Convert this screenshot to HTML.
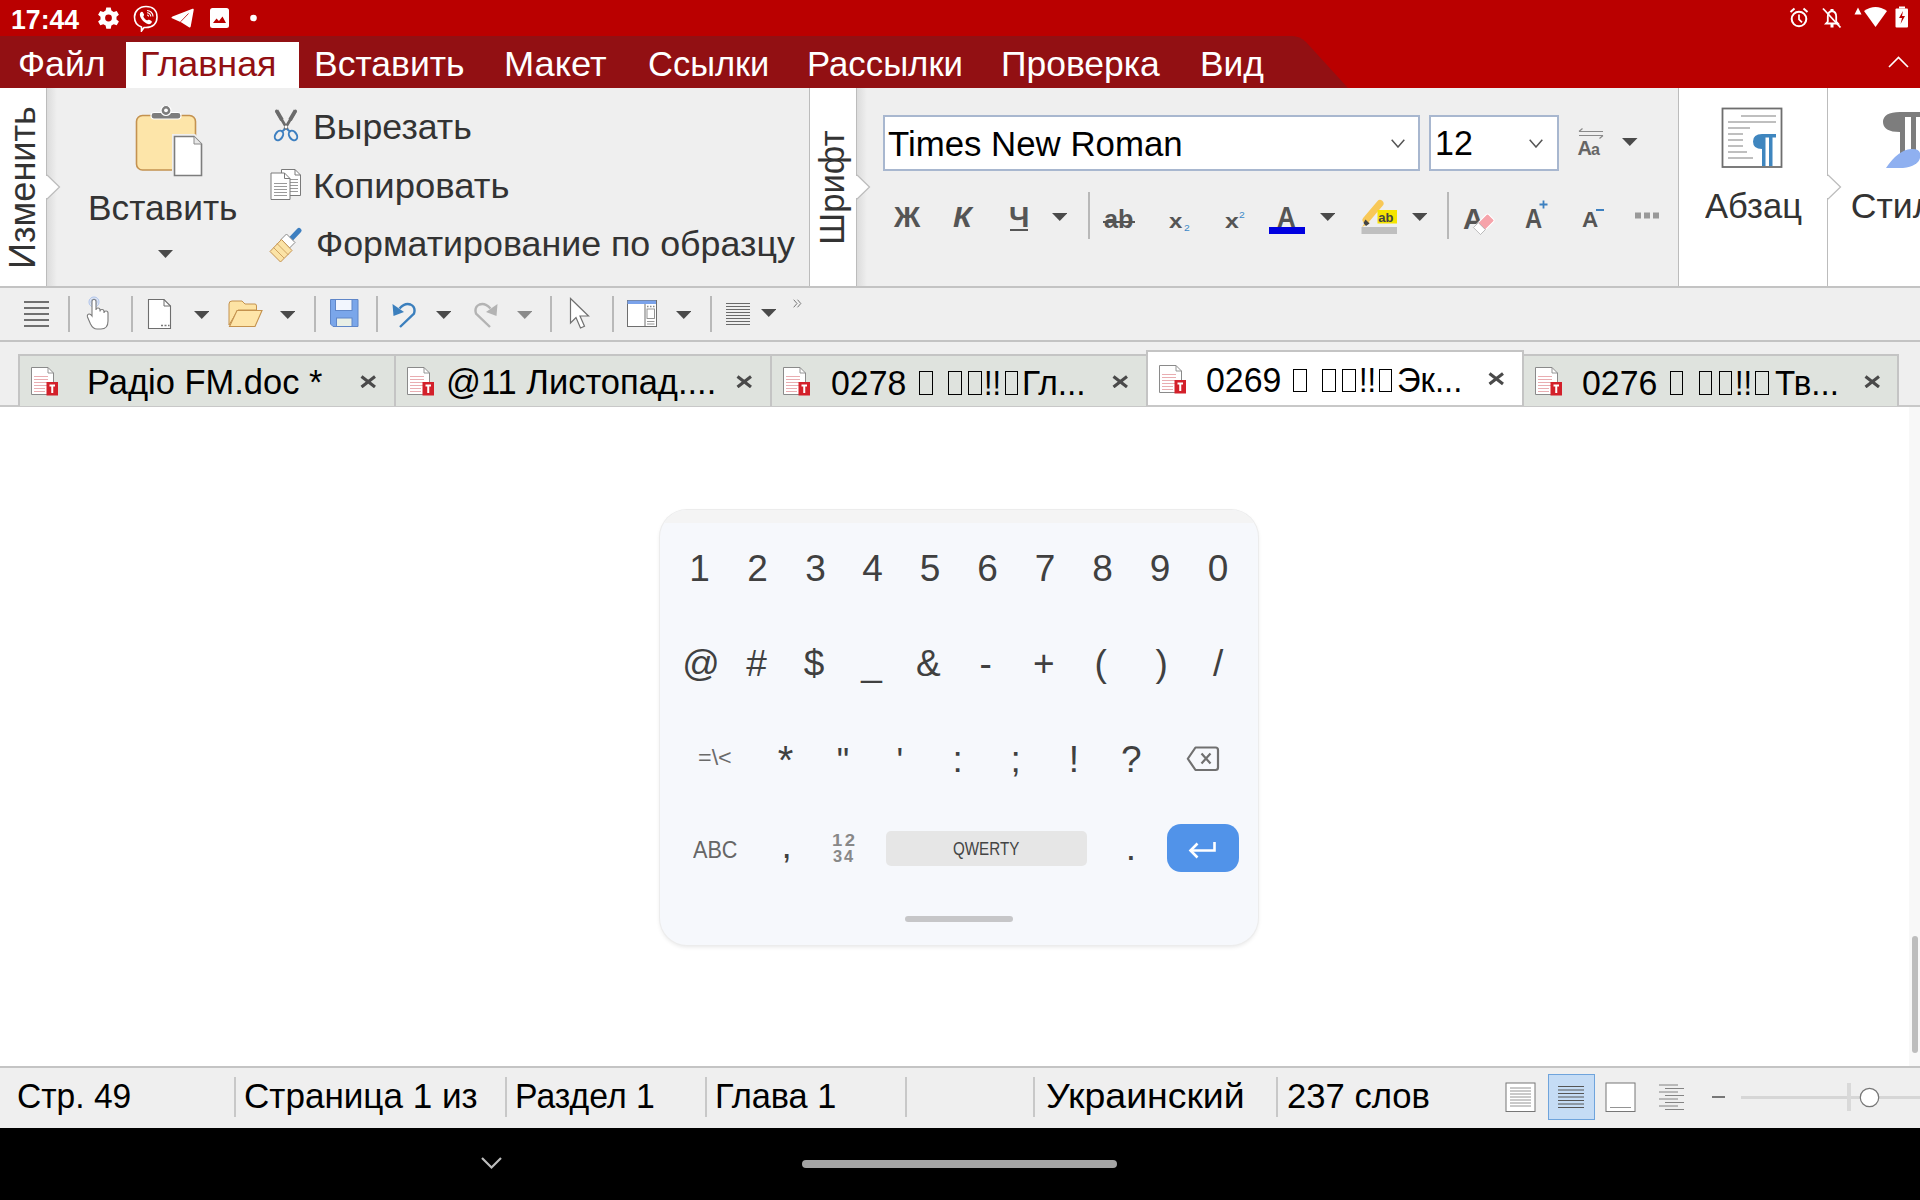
<!DOCTYPE html>
<html><head><meta charset="utf-8"><style>
html,body{margin:0;padding:0;width:1920px;height:1200px;overflow:hidden;background:#fff;font-family:"Liberation Sans",sans-serif;}
.a{position:absolute;display:block}
.t{position:absolute;white-space:pre;line-height:1;transform-origin:0 0;}
</style></head><body>
<div class="a" style="left:0px;top:0px;width:1920px;height:88px;background:#ba0000;"></div>
<svg class="a" style="left:0px;top:36px" width="1360" height="52" viewBox="0 0 1360 52"><path d="M0 0 H1292 Q1300 0 1306 6 L1348 52 H0 Z" fill="#921013"/></svg>
<div class="a" style="left:126px;top:42px;width:173px;height:46px;background:#fff;"></div>
<div class="t" style="left:11.11px;top:4.98px;font-size:28.26px;color:#fff;font-weight:700;transform:scaleX(0.9429);">17:44</div>
<div class="t" style="left:17.95px;top:47.44px;font-size:34.78px;color:#fff;transform:scaleX(1.0247);">Файл</div>
<div class="t" style="left:139.91px;top:47.44px;font-size:34.78px;color:#921013;transform:scaleX(1.0315);">Главная</div>
<div class="t" style="left:313.94px;top:47.44px;font-size:34.78px;color:#fff;transform:scaleX(1.0210);">Вставить</div>
<div class="t" style="left:503.87px;top:47.44px;font-size:34.78px;color:#fff;transform:scaleX(1.0421);">Макет</div>
<div class="t" style="left:648.02px;top:47.44px;font-size:34.78px;color:#fff;transform:scaleX(0.9915);">Ссылки</div>
<div class="t" style="left:807.00px;top:47.44px;font-size:34.78px;color:#fff;">Рассылки</div>
<div class="t" style="left:1000.94px;top:47.44px;font-size:34.78px;color:#fff;transform:scaleX(1.0196);">Проверка</div>
<div class="t" style="left:1199.95px;top:47.44px;font-size:34.78px;color:#fff;transform:scaleX(1.0169);">Вид</div>
<div class="a" style="left:0px;top:88px;width:1920px;height:199px;background:#efefef;"></div>
<div class="a" style="left:0px;top:286px;width:1920px;height:2px;background:#c3c3c3;"></div>
<svg class="a" style="left:97px;top:6px" width="23" height="24" viewBox="0 0 23 24"><g transform="translate(11.5,12)"><path fill="#fff" d="M-2.2 -10.5h4.4l0.7 3.1 2.3 1.3 3-1 2.2 3.8-2.4 2.1v2.6l2.4 2.1-2.2 3.8-3-1-2.3 1.3-0.7 3.1h-4.4l-0.7-3.1-2.3-1.3-3 1-2.2-3.8 2.4-2.1v-2.6l-2.4-2.1 2.2-3.8 3 1 2.3-1.3z"/><circle r="3.4" fill="#ba0000"/></g></svg>
<svg class="a" style="left:133px;top:5px" width="26" height="27" viewBox="0 0 26 27"><path d="M13 1.5c6.5 0 11 3.5 11 10.5s-4.5 10.5-11 10.5h-2l-2.5 3.5v-4c-4.5-1.5-7-4.5-7-10s4.5-10.5 11.5-10.5z" fill="none" stroke="#fff" stroke-width="1.6"/><path d="M7.5 7.5c1-1 2-1 2.5 0l1 2c0.3 0.8-0.8 1.5-0.6 2.3 0.6 1.5 2 2.9 3.4 3.5 0.8 0.2 1.5-0.9 2.3-0.6l2 1c1 0.5 1 1.5 0 2.5-1.5 1.5-3.5 1.2-6-0.6-2-1.5-3.6-3.2-4.6-5.4-0.8-1.8-0.9-3.4 0-4.7z" fill="#fff"/><path d="M14 5.5a6 6 0 0 1 6 6M14 7.8a3.8 3.8 0 0 1 3.8 3.8M14 10a1.6 1.6 0 0 1 1.6 1.6" fill="none" stroke="#fff" stroke-width="1.1"/></svg>
<svg class="a" style="left:171px;top:8px" width="24" height="21" viewBox="0 0 24 21"><path d="M0.5 10 Q0.2 9 1.5 8.5 L21.5 0.8 Q23 0.3 22.7 2 L19.7 18.5 Q19.3 20 18 19.3 L10.5 14.5 Z" fill="#fff"/><path d="M9.5 13.8 L17.5 5.5" stroke="#ba0000" stroke-width="0.8" fill="none"/></svg>
<svg class="a" style="left:210px;top:8px" width="19" height="20" viewBox="0 0 19 20"><rect x="0" y="0" width="19" height="20" rx="2.5" fill="#fff"/><path d="M3 15 L6.5 10.5 L9 13 L12.5 8.5 L16 15 Z" fill="#ba0000"/></svg>
<svg class="a" style="left:249px;top:14px" width="8" height="8" viewBox="0 0 8 8"><circle cx="4.5" cy="4" r="3.3" fill="#fff"/></svg>
<svg class="a" style="left:1789px;top:7px" width="21" height="22" viewBox="0 0 21 22"><circle cx="10" cy="12" r="7.3" fill="none" stroke="#fff" stroke-width="2"/><path d="M10 7.5V12.3L13 15.3" fill="none" stroke="#fff" stroke-width="1.7"/><path d="M1.5 5 L5.5 1.5 M18.5 5 L14.5 1.5" stroke="#fff" stroke-width="2"/></svg>
<svg class="a" style="left:1822px;top:7px" width="20" height="22" viewBox="0 0 20 22"><path d="M4 16.5h12l-1.8-2v-5c0-3-1.6-5-4.2-5.5-2.6 0.5-4.2 2.5-4.2 5.5v5z" fill="none" stroke="#fff" stroke-width="1.8"/><rect x="8.5" y="2" width="3" height="3" fill="#fff"/><rect x="8.5" y="17" width="3" height="3.5" fill="#fff"/><path d="M1 1.5 L18.5 20.5" stroke="#fff" stroke-width="1.8"/></svg>
<svg class="a" style="left:1853px;top:6px" width="36" height="23" viewBox="0 0 36 23"><path d="M1.5 8.5 L5 1.5 L8.5 8.5 Z" fill="#fff"/><path d="M11 5 Q22.5 -3 34 5 L22.5 21 Z" fill="#fff"/></svg>
<svg class="a" style="left:1895px;top:6px" width="14" height="22" viewBox="0 0 14 22"><rect x="4" y="0.5" width="6" height="2" fill="#fff"/><rect x="0.5" y="2.5" width="12.5" height="19" rx="1" fill="#fff"/><path d="M8 5 L4 12 H7 L5.5 18 L10 10 H7 Z" fill="#ba0000"/></svg>
<svg class="a" style="left:1888px;top:55px" width="21" height="14" viewBox="0 0 21 14"><path d="M1 12 L10.5 2.5 L20 12" fill="none" stroke="#fff" stroke-width="1.6"/></svg>
<div class="a" style="left:0px;top:88px;width:46px;height:198px;background:#fff;"></div>
<div class="a" style="left:46px;top:88px;width:1px;height:198px;background:#bcbcbc;"></div>
<div class="a" style="left:47px;top:88px;width:10px;height:198px;background:transparent;background:linear-gradient(90deg,#dcdcdc,#efefef)"></div>
<svg class="a" style="left:46px;top:174px" width="16" height="26" viewBox="0 0 16 26"><path d="M1 0.5 V1 L13.5 13 L1 25 V25.5" fill="#fff" stroke="#bdbdbd" stroke-width="1.3"/><rect x="0" y="2" width="1.2" height="22" fill="#fff"/></svg>
<div class="t" style="left:0;top:0;font-size:36.23px;color:#333;transform:translate(5.20px,268.99px) rotate(-90deg) scaleX(0.9969);">Изменить</div>
<svg class="a" style="left:134px;top:102px" width="72" height="78" viewBox="0 0 72 78">
  <rect x="2.5" y="13.5" width="59" height="54.5" rx="6" fill="#fde5a9" stroke="#c49250" stroke-width="1.6"/>
  <path d="M17 13.5 Q17 10.5 20 10.5 H44 Q47 10.5 47 13.5 Q47 17 44 17 H20 Q17 17 17 13.5Z" fill="#7d7d7d" stroke="#fff" stroke-width="1.2"/>
  <circle cx="32" cy="8.5" r="5" fill="#7d7d7d" stroke="#fff" stroke-width="1.2"/><circle cx="32" cy="8.3" r="1.9" fill="#fff"/>
  <path d="M40.5 34.5 H60 L67.5 42 V73.5 H40.5 Z" fill="#efefef" stroke="#efefef" stroke-width="5"/>
  <path d="M40.5 34.5 H60 L67.5 42 V73.5 H40.5 Z" fill="#fff" stroke="#7d7d7d" stroke-width="1.6"/>
  <path d="M60 34.5 V42 H67.5" fill="#e8e8e8" stroke="#8a8a8a" stroke-width="1"/>
</svg>
<div class="t" style="left:87.96px;top:191.44px;font-size:34.78px;color:#333333;transform:scaleX(1.0140);">Вставить</div>
<svg class="a" style="left:158.0px;top:250px" width="15" height="8" viewBox="0 0 15 8"><path d="M0 0H15 L7.5 8 Z" fill="#4a4a4a"/></svg>
<svg class="a" style="left:272px;top:109px" width="28" height="33" viewBox="0 0 28 33">
 <path d="M4.5 2 L15 19.5 M23.5 2 L13 19.5" stroke="#6b6b6b" stroke-width="2.8" stroke-linecap="round"/>
 <path d="M4.5 1.5 L10 11" stroke="#6b6b6b" stroke-width="3.8"/><path d="M23.5 1.5 L18 11" stroke="#6b6b6b" stroke-width="3.8"/>
 <circle cx="14" cy="18" r="1.4" fill="#fff"/>
 <ellipse cx="7" cy="26.5" rx="3.6" ry="5.2" transform="rotate(35 7 26.5)" fill="none" stroke="#3d7fc0" stroke-width="2"/>
 <ellipse cx="21" cy="26.5" rx="3.6" ry="5.2" transform="rotate(-35 21 26.5)" fill="none" stroke="#3d7fc0" stroke-width="2"/>
 <path d="M13 20 L9.5 23 M15 20 L18.5 23" stroke="#3d7fc0" stroke-width="2"/>
</svg>
<div class="t" style="left:312.92px;top:109.74px;font-size:34.78px;color:#333333;transform:scaleX(1.0267);">Вырезать</div>
<svg class="a" style="left:270px;top:169px" width="32" height="32" viewBox="0 0 32 32">
 <path d="M11.5 0.5 H25 L30.5 6 V26.5 H11.5Z" fill="#fff" stroke="#7a7a7a" stroke-width="1"/>
 <path d="M25 0.5 V6 H30.5" fill="none" stroke="#7a7a7a" stroke-width="1"/>
 <path d="M19 10.5H28 M19 13.5H28 M19 16.5H28 M19 19.5H28 M19 22.5H28" stroke="#9a9a9a" stroke-width="1"/>
 <path d="M1 4 H14.5 L20 9.5 V30.5 H1Z" fill="#fff" stroke="#7a7a7a" stroke-width="1"/>
 <path d="M14.5 4 V9.5 H20" fill="none" stroke="#7a7a7a" stroke-width="1"/>
 <path d="M4 14.5H17 M4 17.5H17 M4 20.5H17 M4 23.5H17 M4 26.5H17" stroke="#9a9a9a" stroke-width="1"/>
</svg>
<div class="t" style="left:312.85px;top:168.74px;font-size:34.78px;color:#333333;transform:scaleX(1.0492);">Копировать</div>
<svg class="a" style="left:268px;top:227px" width="36" height="35" viewBox="0 0 36 35">
 <path d="M22 13 L31 3.5" stroke="#3d7fc0" stroke-width="5" stroke-linecap="round"/>
 <path d="M13 12.5 L18.5 7 L27 15.5 L21.5 21Z" fill="#fff" stroke="#8a8a8a" stroke-width="1"/>
 <path d="M13.5 12.5 L2 24.5 L12.5 35 L24 23.5Z" fill="#fbe3a6" stroke="#c49250" stroke-width="1"/>
 <path d="M9 16.5 L20.5 28 M5.5 20.5 L16 31" stroke="#c49250" stroke-width="0.8"/>
</svg>
<div class="t" style="left:315.94px;top:227.24px;font-size:34.78px;color:#333333;transform:scaleX(1.0292);">Форматирование по образцу</div>
<div class="a" style="left:809px;top:88px;width:1px;height:198px;background:#bcbcbc;"></div>
<div class="a" style="left:810px;top:88px;width:46px;height:198px;background:#fff;"></div>
<div class="a" style="left:856px;top:88px;width:1px;height:198px;background:#bcbcbc;"></div>
<div class="a" style="left:857px;top:88px;width:10px;height:198px;background:transparent;background:linear-gradient(90deg,#dcdcdc,#efefef)"></div>
<svg class="a" style="left:856px;top:174px" width="16" height="26" viewBox="0 0 16 26"><path d="M1 0.5 V1 L13.5 13 L1 25 V25.5" fill="#fff" stroke="#bdbdbd" stroke-width="1.3"/><rect x="0" y="2" width="1.2" height="22" fill="#fff"/></svg>
<div class="t" style="left:0;top:0;font-size:34.78px;color:#333;transform:translate(814.94px,244.70px) rotate(-90deg) scaleX(0.9991);">Шрифт</div>
<div class="a" style="left:883px;top:114.5px;width:537px;height:56.5px;background:#fff;box-sizing:border-box;border:2px solid #a8b7cf"></div>
<div class="t" style="left:888.02px;top:127.00px;font-size:35.65px;color:#000;transform:scaleX(0.9765);">Times New Roman</div>
<svg class="a" style="left:1390.5px;top:139px" width="14" height="9" viewBox="0 0 14 9"><path d="M0.7 0.7 L7.0 8 L13.3 0.7" fill="none" stroke="#555" stroke-width="1.5"/></svg>
<div class="a" style="left:1429px;top:114.5px;width:130px;height:56.5px;background:#fff;box-sizing:border-box;border:2px solid #a8b7cf"></div>
<div class="t" style="left:1434.63px;top:126.32px;font-size:35.51px;color:#000;transform:scaleX(0.9571);">12</div>
<svg class="a" style="left:1528.5px;top:139px" width="14" height="9" viewBox="0 0 14 9"><path d="M0.7 0.7 L7.0 8 L13.3 0.7" fill="none" stroke="#555" stroke-width="1.5"/></svg>
<svg class="a" style="left:1576px;top:126px" width="30" height="31" viewBox="0 0 30 31">
 <path d="M3 5.5 H27 M3 5.5 L6.5 2.5 M27 9.5 H3 M27 9.5 L23.5 12.5" stroke="#8a8a8a" stroke-width="1.2" fill="none"/>
 <text x="1.5" y="29" font-family="Liberation Sans" font-size="20" font-weight="700" fill="#666">A</text>
 <text x="15" y="29" font-family="Liberation Sans" font-size="16" font-weight="700" fill="#666">a</text>
</svg>
<svg class="a" style="left:1622.25px;top:138px" width="15.5" height="8" viewBox="0 0 15.5 8"><path d="M0 0H15.5 L7.75 8 Z" fill="#4a4a4a"/></svg>
<div class="t" style="left:894.00px;top:203.36px;font-size:28.99px;color:#555;font-weight:700;">Ж</div>
<div class="t" style="left:952.94px;top:203.36px;font-size:28.99px;color:#555;font-weight:700;font-style:italic;transform:scaleX(1.0556);">К</div>
<div class="t" style="left:1009.00px;top:203.36px;font-size:28.99px;color:#555;font-weight:700;">Ч</div>
<div class="a" style="left:1010px;top:229px;width:18px;height:1.5px;background:#555;"></div>
<svg class="a" style="left:1051.75px;top:213px" width="15.5" height="8" viewBox="0 0 15.5 8"><path d="M0 0H15.5 L7.75 8 Z" fill="#4a4a4a"/></svg>
<div class="a" style="left:1087.5px;top:192px;width:2px;height:47px;background:#b8b8b8;"></div>
<div class="t" style="left:1104.03px;top:205.82px;font-size:26.09px;color:#555;font-weight:700;transform:scaleX(0.9655);">ab</div>
<div class="a" style="left:1103px;top:221px;width:32px;height:1.6px;background:#555;"></div>
<div class="t" style="left:1169.00px;top:210.75px;font-size:20.29px;color:#555;font-weight:700;transform:scaleX(1.1818);">x</div>
<div class="t" style="left:1183.50px;top:222.99px;font-size:9.42px;color:#3d8ac8;transform:scaleX(1.1000);">2</div>
<div class="t" style="left:1224.50px;top:210.75px;font-size:20.29px;color:#555;font-weight:700;transform:scaleX(1.2273);">x</div>
<div class="t" style="left:1239.00px;top:209.99px;font-size:9.42px;color:#3d8ac8;transform:scaleX(1.1000);">2</div>
<div class="t" style="left:1277.11px;top:203.36px;font-size:28.99px;color:#555;font-weight:700;transform:scaleX(0.8947);">A</div>
<div class="a" style="left:1269px;top:227px;width:36px;height:7px;background:#0000e0;"></div>
<svg class="a" style="left:1319.75px;top:213px" width="15.5" height="8" viewBox="0 0 15.5 8"><path d="M0 0H15.5 L7.75 8 Z" fill="#4a4a4a"/></svg>
<svg class="a" style="left:1360px;top:199px" width="38" height="37" viewBox="0 0 38 37">
 <path d="M6 21 L20 4.5" stroke="#f8c857" stroke-width="7" stroke-linecap="round"/>
 <path d="M2 28 L6.5 21 L10 24 Z" fill="#f8c857"/>
 <path d="M5.5 20.5 L9.5 24.5 L6 27 L3.5 24Z" fill="#444"/>
 <rect x="17.5" y="11" width="19.5" height="13.5" fill="#f5e400"/>
 <text x="18.3" y="23" font-family="Liberation Sans" font-size="13" font-weight="700" fill="#444">ab</text>
 <rect x="1.5" y="28" width="35.5" height="7" fill="#bfbfbf"/>
</svg>
<svg class="a" style="left:1411.75px;top:212.5px" width="15.5" height="8" viewBox="0 0 15.5 8"><path d="M0 0H15.5 L7.75 8 Z" fill="#4a4a4a"/></svg>
<div class="a" style="left:1447px;top:192px;width:2px;height:47px;background:#b8b8b8;"></div>
<svg class="a" style="left:1462px;top:205px" width="36" height="30" viewBox="0 0 36 30">
 <text x="1" y="24" font-family="Liberation Sans" font-size="29" font-weight="700" fill="#555">A</text>
 <g transform="rotate(-45 22 19)"><rect x="12" y="14" width="20" height="10" rx="1.5" fill="#f6a3aa" stroke="#fff" stroke-width="1"/><rect x="12" y="14" width="7" height="10" fill="#fff" stroke="#aaa" stroke-width="0.8"/></g>
</svg>
<div class="t" style="left:1525.16px;top:203.98px;font-size:28.26px;color:#555;font-weight:700;transform:scaleX(0.8421);">A</div>
<svg class="a" style="left:1538px;top:199px" width="11" height="11" viewBox="0 0 11 11"><path d="M5.5 1.5 V9.5 M1.5 5.5 H9.5" stroke="#3d80c0" stroke-width="1.8"/></svg>
<div class="t" style="left:1582.00px;top:208.91px;font-size:22.46px;color:#555;font-weight:700;">A</div>
<div class="a" style="left:1596px;top:208.5px;width:8px;height:2px;background:#3d80c0;"></div>
<svg class="a" style="left:1634px;top:212px" width="26" height="8" viewBox="0 0 26 8"><rect x="1" y="0.5" width="6" height="6" fill="#999"/><rect x="10" y="0.5" width="6" height="6" fill="#999"/><rect x="19" y="0.5" width="6" height="6" fill="#999"/></svg>
<div class="a" style="left:1678px;top:88px;width:1px;height:198px;background:#bcbcbc;"></div>
<div class="a" style="left:1679px;top:88px;width:241px;height:198px;background:#fff;"></div>
<div class="a" style="left:1826.5px;top:88px;width:1.5px;height:198px;background:#bcbcbc;"></div>
<svg class="a" style="left:1827px;top:174px" width="16" height="26" viewBox="0 0 16 26"><path d="M1 0.5 V1 L13.5 13 L1 25 V25.5" fill="#fff" stroke="#bdbdbd" stroke-width="1.3"/><rect x="0" y="2" width="1.2" height="22" fill="#fff"/></svg>
<svg class="a" style="left:1720px;top:106px" width="64" height="64" viewBox="0 0 64 64">
 <rect x="2.5" y="2.5" width="59" height="58.5" fill="#fff" stroke="#6e6e6e" stroke-width="1.8"/>
 <path d="M21 10H56 M8 16H56 M8 22H30 M8 28H23 M8 34H23 M8 40H23 M8 46H27 M8 52H33" stroke="#aaa" stroke-width="1.6"/>
 <path d="M56 28 H42 Q33 28 33 35.5 Q33 43 42 43 V60 H45.5 V31.5 H49 V60 H52.5 V31.5 H56 Z" fill="#3f86bf"/>
</svg>
<div class="t" style="left:1704.50px;top:188.70px;font-size:35.65px;color:#333333;transform:scaleX(0.9697);">Абзац</div>
<svg class="a" style="left:1878px;top:108px" width="42" height="64" viewBox="0 0 42 64">
 <path d="M42 4 H22 Q5 4 5 14 Q5 24 22 24 V56 H27 V9 H33 V56 H38 V9 H42Z" fill="#7d7d7d"/>
 <path d="M8 60 Q20 42 33 41 Q44 40 42 50 Q40 58 25 60 Z" fill="#8fb0f0"/>
</svg>
<div class="t" style="left:1850.70px;top:188.70px;font-size:35.65px;color:#333333;">Стили</div>
<div class="a" style="left:0px;top:288px;width:1920px;height:52px;background:#efefef;"></div>
<div class="a" style="left:0px;top:340px;width:1920px;height:2px;background:#c3c3c3;"></div>
<svg class="a" style="left:23px;top:300px" width="28" height="28" viewBox="0 0 28 28"><path d="M1 2H26 M1 8H26 M1 14H26 M1 20H26 M1 26H26" stroke="#707070" stroke-width="2"/></svg>
<div class="a" style="left:68px;top:296px;width:2px;height:36px;background:#b9b9b9;"></div>
<svg class="a" style="left:86px;top:295px" width="24" height="36" viewBox="0 0 24 36">
 <circle cx="8" cy="7" r="5" fill="none" stroke="#a9c1ee" stroke-width="1"/><circle cx="8" cy="7" r="3.2" fill="none" stroke="#a9c1ee" stroke-width="1"/>
 <path d="M6 19 V6.5 Q6 4.5 8 4.5 Q10 4.5 10 6.5 V15 Q10 13 12 13 Q14 13 14 15 V16.5 Q14 14.5 16 14.5 Q18 14.5 18 16.5 V18 Q18 16 20 16 Q22 16 22 18 V26 Q22 34 15 34 H11 Q7 34 4.5 29 L1.5 22 Q0.8 19.5 3 19 Q4.5 18.8 6 21Z" fill="#fff" stroke="#7a7a7a" stroke-width="1.1"/>
</svg>
<div class="a" style="left:130.5px;top:296px;width:2px;height:36px;background:#b9b9b9;"></div>
<svg class="a" style="left:147px;top:298px" width="25" height="32" viewBox="0 0 25 32">
 <path d="M1.5 1.5 H17 L23.5 8 V30.5 H1.5Z" fill="#fff" stroke="#6e6e6e" stroke-width="1.1"/>
 <path d="M17 1.5 V8 H23.5" fill="none" stroke="#6e6e6e" stroke-width="1"/>
 <path d="M14 27.5h2 M17.5 27.5h2 M21 27.5h1.5" stroke="#777" stroke-width="1.5"/>
</svg>
<svg class="a" style="left:193.75px;top:311px" width="15.5" height="8" viewBox="0 0 15.5 8"><path d="M0 0H15.5 L7.75 8 Z" fill="#4a4a4a"/></svg>
<svg class="a" style="left:228px;top:300px" width="36" height="28" viewBox="0 0 36 28">
 <path d="M1 4 Q1 1 4 1 H14 L17 4 H27 Q28.5 4 28.5 6 V10 H10 L1 25Z" fill="#fde3a4" stroke="#c4924e" stroke-width="1"/>
 <path d="M1.5 26.5 L9 10.5 H34 L27 26.5Z" fill="#fee5a9" stroke="#c4924e" stroke-width="1.1"/>
</svg>
<svg class="a" style="left:279.75px;top:311px" width="15.5" height="8" viewBox="0 0 15.5 8"><path d="M0 0H15.5 L7.75 8 Z" fill="#4a4a4a"/></svg>
<div class="a" style="left:314px;top:296px;width:2px;height:36px;background:#b9b9b9;"></div>
<svg class="a" style="left:330px;top:299px" width="29" height="29" viewBox="0 0 29 29">
 <path d="M0.5 0.5 H28 V27.5 H3 L0.5 25Z" fill="#7aa6ea" stroke="#5f86c8" stroke-width="1"/>
 <rect x="5.5" y="0.5" width="16.5" height="11" fill="#f2f6fe" stroke="#5f86c8" stroke-width="1"/>
 <rect x="6.5" y="19" width="15.5" height="8.5" fill="#e9efe6" stroke="#5f86c8" stroke-width="1"/>
</svg>
<div class="a" style="left:376px;top:296px;width:2px;height:36px;background:#b9b9b9;"></div>
<svg class="a" style="left:391px;top:300px" width="26" height="29" viewBox="0 0 26 29">
 <path d="M8.5 8.5 Q14 2.5 19.5 4.5 Q25 7 23 13.5 L9 27" fill="none" stroke="#3b7fbd" stroke-width="2.4"/>
 <path d="M1.5 4 L2.5 16 L13 12Z" fill="#3b7fbd"/>
</svg>
<svg class="a" style="left:435.75px;top:311px" width="15.5" height="8" viewBox="0 0 15.5 8"><path d="M0 0H15.5 L7.75 8 Z" fill="#4a4a4a"/></svg>
<svg class="a" style="left:473px;top:300px" width="26" height="29" viewBox="0 0 26 29">
 <path d="M17.5 8.5 Q12 2.5 6.5 4.5 Q1 7 3 13.5 L17 27" fill="none" stroke="#b3b3b3" stroke-width="2.4"/>
 <path d="M24.5 4 L23.5 16 L13 12Z" fill="#b3b3b3"/>
</svg>
<svg class="a" style="left:516.75px;top:311px" width="15.5" height="8" viewBox="0 0 15.5 8"><path d="M0 0H15.5 L7.75 8 Z" fill="#8a8a8a"/></svg>
<div class="a" style="left:550px;top:296px;width:2px;height:36px;background:#b9b9b9;"></div>
<svg class="a" style="left:569px;top:297px" width="22" height="33" viewBox="0 0 22 33"><path d="M1.5 1.5 V26 L7 20.5 L11.5 31 L15.5 29.3 L11 19 H19.5Z" fill="#fff" stroke="#707070" stroke-width="1.2"/></svg>
<div class="a" style="left:612px;top:296px;width:2px;height:36px;background:#b9b9b9;"></div>
<svg class="a" style="left:626px;top:299px" width="32" height="29" viewBox="0 0 32 29">
 <rect x="1.5" y="1.5" width="29" height="26" fill="#fff" stroke="#6e6e6e" stroke-width="1"/>
 <rect x="1.5" y="1.5" width="28.5" height="3.5" fill="#7aa2ea"/>
 <path d="M19 5 V27.5" stroke="#6e6e6e" stroke-width="1"/>
 <path d="M21 7.5h1.5 M24 7.5h1.5 M27 7.5h1.5" stroke="#888" stroke-width="1.3"/>
 <rect x="21" y="10" width="7.5" height="9.5" fill="none" stroke="#888" stroke-width="0.9"/>
 <path d="M21 22.5H28.5 M21 25H28.5" stroke="#888" stroke-width="0.9"/>
</svg>
<svg class="a" style="left:675.75px;top:311px" width="15.5" height="8" viewBox="0 0 15.5 8"><path d="M0 0H15.5 L7.75 8 Z" fill="#4a4a4a"/></svg>
<div class="a" style="left:710px;top:296px;width:2px;height:36px;background:#b9b9b9;"></div>
<svg class="a" style="left:725px;top:302px" width="26" height="24" viewBox="0 0 26 24"><path d="M1 1.5H25 M1 4.5H25 M1 7.5H25 M1 10.5H25 M1 13.5H25 M1 16.5H25 M1 19.5H25 M1 22.5H25" stroke="#6a6a6a" stroke-width="1"/></svg>
<svg class="a" style="left:760.75px;top:309px" width="15.5" height="8" viewBox="0 0 15.5 8"><path d="M0 0H15.5 L7.75 8 Z" fill="#4a4a4a"/></svg>
<svg class="a" style="left:793px;top:299px" width="10" height="10" viewBox="0 0 10 10"><path d="M0.7 0.7 L4 4.5 L0.7 8.3 M4.5 0.7 L7.8 4.5 L4.5 8.3" fill="none" stroke="#777" stroke-width="1"/></svg>
<div class="a" style="left:0px;top:342px;width:1920px;height:64px;background:#efefef;"></div>
<div class="a" style="left:0px;top:405px;width:1920px;height:2px;background:#c8c8c8;"></div>
<div class="a" style="left:18px;top:354px;width:378px;height:52px;background:#dfe3de;box-sizing:border-box;border:2px solid #c4c4c4;border-bottom:none"></div>
<div class="a" style="left:394px;top:354px;width:378px;height:52px;background:#dfe3de;box-sizing:border-box;border:2px solid #c4c4c4;border-bottom:none"></div>
<div class="a" style="left:770px;top:354px;width:378px;height:52px;background:#dfe3de;box-sizing:border-box;border:2px solid #c4c4c4;border-bottom:none"></div>
<div class="a" style="left:1522px;top:354px;width:377px;height:52px;background:#dfe3de;box-sizing:border-box;border:2px solid #c4c4c4;border-bottom:none"></div>
<div class="a" style="left:1146px;top:350px;width:378px;height:55px;background:#fff;box-sizing:border-box;border:2px solid #c4c4c4;border-bottom:none"></div>
<svg class="a" style="left:31px;top:367px" width="28" height="29" viewBox="0 0 28 29">
 <path d="M0.5 0.5 H17 L22.5 6 V27.5 H0.5Z" fill="#fff" stroke="#8a8a8a" stroke-width="1"/>
 <path d="M17 0.5 V6 H22.5" fill="none" stroke="#8a8a8a" stroke-width="0.9"/>
 <path d="M3 9.5H17 M3 12.5H17 M3 15.5H17 M3 18.5H17 M3 21.5H14 M3 24.5H14" stroke="#e7a4a8" stroke-width="0.9"/>
 <rect x="15.5" y="15" width="11.5" height="13.5" fill="#d3202a"/>
 <path d="M18.5 18.5H24 M21.25 18.5V26" stroke="#fff" stroke-width="2"/>
</svg>
<div class="t" style="left:86.73px;top:365.14px;font-size:34.78px;color:#000;transform:scaleX(0.9910);">Радіо FM.doc *</div>
<svg class="a" style="left:360px;top:374.5px" width="16.5" height="13.5" viewBox="0 0 16.5 13.5"><path d="M1.5 1.5 L15.0 12.0 M15.0 1.5 L1.5 12.0" stroke="#4a4a4a" stroke-width="3.1"/></svg>
<svg class="a" style="left:407px;top:367px" width="28" height="29" viewBox="0 0 28 29">
 <path d="M0.5 0.5 H17 L22.5 6 V27.5 H0.5Z" fill="#fff" stroke="#8a8a8a" stroke-width="1"/>
 <path d="M17 0.5 V6 H22.5" fill="none" stroke="#8a8a8a" stroke-width="0.9"/>
 <path d="M3 9.5H17 M3 12.5H17 M3 15.5H17 M3 18.5H17 M3 21.5H14 M3 24.5H14" stroke="#e7a4a8" stroke-width="0.9"/>
 <rect x="15.5" y="15" width="11.5" height="13.5" fill="#d3202a"/>
 <path d="M18.5 18.5H24 M21.25 18.5V26" stroke="#fff" stroke-width="2"/>
</svg>
<div class="t" style="left:445.73px;top:365.14px;font-size:34.78px;color:#000;transform:scaleX(0.9914);">@11 Листопад....</div>
<svg class="a" style="left:736px;top:374.5px" width="16.5" height="13.5" viewBox="0 0 16.5 13.5"><path d="M1.5 1.5 L15.0 12.0 M15.0 1.5 L1.5 12.0" stroke="#4a4a4a" stroke-width="3.1"/></svg>
<svg class="a" style="left:783px;top:367px" width="28" height="29" viewBox="0 0 28 29">
 <path d="M0.5 0.5 H17 L22.5 6 V27.5 H0.5Z" fill="#fff" stroke="#8a8a8a" stroke-width="1"/>
 <path d="M17 0.5 V6 H22.5" fill="none" stroke="#8a8a8a" stroke-width="0.9"/>
 <path d="M3 9.5H17 M3 12.5H17 M3 15.5H17 M3 18.5H17 M3 21.5H14 M3 24.5H14" stroke="#e7a4a8" stroke-width="0.9"/>
 <rect x="15.5" y="15" width="11.5" height="13.5" fill="#d3202a"/>
 <path d="M18.5 18.5H24 M21.25 18.5V26" stroke="#fff" stroke-width="2"/>
</svg>
<svg class="a" style="left:1112px;top:374.5px" width="16.5" height="13.5" viewBox="0 0 16.5 13.5"><path d="M1.5 1.5 L15.0 12.0 M15.0 1.5 L1.5 12.0" stroke="#4a4a4a" stroke-width="3.1"/></svg>
<svg class="a" style="left:1158.5px;top:365px" width="28" height="29" viewBox="0 0 28 29">
 <path d="M0.5 0.5 H17 L22.5 6 V27.5 H0.5Z" fill="#fff" stroke="#8a8a8a" stroke-width="1"/>
 <path d="M17 0.5 V6 H22.5" fill="none" stroke="#8a8a8a" stroke-width="0.9"/>
 <path d="M3 9.5H17 M3 12.5H17 M3 15.5H17 M3 18.5H17 M3 21.5H14 M3 24.5H14" stroke="#e7a4a8" stroke-width="0.9"/>
 <rect x="15.5" y="15" width="11.5" height="13.5" fill="#d3202a"/>
 <path d="M18.5 18.5H24 M21.25 18.5V26" stroke="#fff" stroke-width="2"/>
</svg>
<svg class="a" style="left:1488px;top:372.3px" width="16.5" height="13.5" viewBox="0 0 16.5 13.5"><path d="M1.5 1.5 L15.0 12.0 M15.0 1.5 L1.5 12.0" stroke="#4a4a4a" stroke-width="3.1"/></svg>
<svg class="a" style="left:1535px;top:367px" width="28" height="29" viewBox="0 0 28 29">
 <path d="M0.5 0.5 H17 L22.5 6 V27.5 H0.5Z" fill="#fff" stroke="#8a8a8a" stroke-width="1"/>
 <path d="M17 0.5 V6 H22.5" fill="none" stroke="#8a8a8a" stroke-width="0.9"/>
 <path d="M3 9.5H17 M3 12.5H17 M3 15.5H17 M3 18.5H17 M3 21.5H14 M3 24.5H14" stroke="#e7a4a8" stroke-width="0.9"/>
 <rect x="15.5" y="15" width="11.5" height="13.5" fill="#d3202a"/>
 <path d="M18.5 18.5H24 M21.25 18.5V26" stroke="#fff" stroke-width="2"/>
</svg>
<svg class="a" style="left:1864px;top:374.5px" width="16.5" height="13.5" viewBox="0 0 16.5 13.5"><path d="M1.5 1.5 L15.0 12.0 M15.0 1.5 L1.5 12.0" stroke="#4a4a4a" stroke-width="3.1"/></svg>
<div class="a" style="left:0px;top:407px;width:1920px;height:660px;background:#fff;"></div>
<div class="a" style="left:1909px;top:407px;width:11px;height:660px;background:#f8f8f8;"></div>
<div class="a" style="left:1912px;top:936px;width:6px;height:117px;background:#bdbdbd;border-radius:3px"></div>
<div class="a" style="left:0px;top:1066px;width:1920px;height:2px;background:#c4c4c4;"></div>
<div class="a" style="left:0px;top:1068px;width:1920px;height:60px;background:#efefef;"></div>
<div class="t" style="left:17.07px;top:1079.44px;font-size:34.78px;color:#000;transform:scaleX(0.9652);">Стр. 49</div>
<div class="a" style="left:234px;top:1077px;width:2px;height:40px;background:#c8c8c8;"></div>
<div class="t" style="left:244.48px;top:1079.44px;font-size:34.78px;color:#000;transform:scaleX(1.0087);">Страница 1 из</div>
<div class="a" style="left:505px;top:1077px;width:2px;height:40px;background:#c8c8c8;"></div>
<div class="t" style="left:514.59px;top:1079.44px;font-size:34.78px;color:#000;transform:scaleX(0.9712);">Раздел 1</div>
<div class="a" style="left:705px;top:1077px;width:2px;height:40px;background:#c8c8c8;"></div>
<div class="t" style="left:714.54px;top:1079.44px;font-size:34.78px;color:#000;transform:scaleX(0.9873);">Глава 1</div>
<div class="a" style="left:905px;top:1077px;width:2px;height:40px;background:#c8c8c8;"></div>
<div class="a" style="left:1033px;top:1077px;width:2px;height:40px;background:#c8c8c8;"></div>
<div class="t" style="left:1046.42px;top:1079.44px;font-size:34.78px;color:#000;transform:scaleX(1.0773);">Украинский</div>
<div class="a" style="left:1276px;top:1077px;width:2px;height:40px;background:#c8c8c8;"></div>
<div class="t" style="left:1287.01px;top:1079.44px;font-size:34.78px;color:#000;transform:scaleX(0.9964);">237 слов</div>
<svg class="a" style="left:1505px;top:1082px" width="32" height="31" viewBox="0 0 32 31"><rect x="1" y="1" width="29" height="28.5" fill="#fff" stroke="#777" stroke-width="1"/><path d="M5 6H26 M5 9H26 M5 12H26 M5 15H26 M5 18H26 M5 21H26 M5 24H26" stroke="#888" stroke-width="0.9"/></svg>
<div class="a" style="left:1547.5px;top:1073.5px;width:47.5px;height:46.5px;background:#c5dcf5;box-sizing:border-box;border:1.5px solid #6fa4dc"></div>
<svg class="a" style="left:1557px;top:1085px" width="28" height="25" viewBox="0 0 28 25"><path d="M1 1.5H27 M1 5H27 M1 8.5H27 M1 12H27 M1 15.5H27 M1 19H27 M1 22.5H27" stroke="#555" stroke-width="1.2"/></svg>
<svg class="a" style="left:1605px;top:1082px" width="32" height="31" viewBox="0 0 32 31"><rect x="1" y="1" width="29" height="28.5" fill="#fff" stroke="#777" stroke-width="1"/><path d="M5 25.5H26" stroke="#888" stroke-width="0.9"/></svg>
<svg class="a" style="left:1658px;top:1084px" width="27" height="27" viewBox="0 0 27 27"><path d="M1 1H20 M7 4.5H26 M1 8H20 M7 11.5H26 M1 15H20 M7 18.5H26 M1 22H20 M7 25.5H26" stroke="#777" stroke-width="0.9"/></svg>
<div class="a" style="left:1712px;top:1096px;width:13px;height:1.5px;background:#777;"></div>
<div class="a" style="left:1741px;top:1096px;width:179px;height:2.5px;background:#d6d6d6;"></div>
<div class="a" style="left:1847px;top:1083px;width:4px;height:28px;background:#d9d9d9;"></div>
<svg class="a" style="left:1859px;top:1087px" width="21" height="21" viewBox="0 0 21 21"><circle cx="10.5" cy="10.5" r="9.2" fill="#fff" stroke="#777" stroke-width="1.2"/></svg>
<div class="a" style="left:0px;top:1128px;width:1920px;height:72px;background:#000;"></div>
<svg class="a" style="left:480px;top:1156px" width="23" height="15" viewBox="0 0 23 15"><path d="M2 2 L11.5 11.5 L21 2" fill="none" stroke="#bdbdbd" stroke-width="2.2"/></svg>
<div class="a" style="left:801.5px;top:1160px;width:315px;height:8px;background:#a4a4a4;border-radius:4px"></div>
<div class="t" style="left:831.41px;top:365.50px;font-size:34.35px;color:#000;transform:scaleX(0.9865);">0278</div>
<div class="a" style="left:918.9px;top:371.4px;width:13.7px;height:23.3px;background:transparent;box-sizing:border-box;border:1.5px solid #000"></div>
<div class="a" style="left:948.0px;top:371.4px;width:13.7px;height:23.3px;background:transparent;box-sizing:border-box;border:1.5px solid #000"></div>
<div class="a" style="left:968.0px;top:371.4px;width:13.7px;height:23.3px;background:transparent;box-sizing:border-box;border:1.5px solid #000"></div>
<div class="a" style="left:1004.5px;top:371.4px;width:13.7px;height:23.3px;background:transparent;box-sizing:border-box;border:1.5px solid #000"></div>
<div class="t" style="left:984.32px;top:365.50px;font-size:34.35px;color:#000;transform:scaleX(0.8923);">!!</div>
<div class="t" style="left:1022.08px;top:365.50px;font-size:34.35px;color:#000;transform:scaleX(0.9746);">Гл...</div>
<div class="t" style="left:1205.61px;top:363.00px;font-size:34.35px;color:#000;transform:scaleX(0.9865);">0269</div>
<div class="a" style="left:1293.1px;top:368.9px;width:13.7px;height:23.3px;background:transparent;box-sizing:border-box;border:1.5px solid #000"></div>
<div class="a" style="left:1322.1999999999998px;top:368.9px;width:13.7px;height:23.3px;background:transparent;box-sizing:border-box;border:1.5px solid #000"></div>
<div class="a" style="left:1342.1999999999998px;top:368.9px;width:13.7px;height:23.3px;background:transparent;box-sizing:border-box;border:1.5px solid #000"></div>
<div class="a" style="left:1378.6999999999998px;top:368.9px;width:13.7px;height:23.3px;background:transparent;box-sizing:border-box;border:1.5px solid #000"></div>
<div class="t" style="left:1358.52px;top:363.00px;font-size:34.35px;color:#000;transform:scaleX(0.8923);">!!</div>
<div class="t" style="left:1397.29px;top:363.00px;font-size:34.35px;color:#000;transform:scaleX(0.9556);">Эк...</div>
<div class="t" style="left:1582.21px;top:365.50px;font-size:34.35px;color:#000;transform:scaleX(0.9865);">0276</div>
<div class="a" style="left:1669.7px;top:371.4px;width:13.7px;height:23.3px;background:transparent;box-sizing:border-box;border:1.5px solid #000"></div>
<div class="a" style="left:1698.8px;top:371.4px;width:13.7px;height:23.3px;background:transparent;box-sizing:border-box;border:1.5px solid #000"></div>
<div class="a" style="left:1718.8px;top:371.4px;width:13.7px;height:23.3px;background:transparent;box-sizing:border-box;border:1.5px solid #000"></div>
<div class="a" style="left:1755.3px;top:371.4px;width:13.7px;height:23.3px;background:transparent;box-sizing:border-box;border:1.5px solid #000"></div>
<div class="t" style="left:1735.12px;top:365.50px;font-size:34.35px;color:#000;transform:scaleX(0.8923);">!!</div>
<div class="t" style="left:1774.84px;top:365.50px;font-size:34.35px;color:#000;transform:scaleX(0.9629);">Тв...</div>
<div class="a" style="left:659.5px;top:510px;width:598.5px;height:434.5px;background:#f6f8fc;border-radius:27px;overflow:hidden;box-shadow:0 0 0 1px #ececec,0 2px 4px rgba(0,0,0,0.10)"><div style="height:13px;background:#f4f4f4"></div></div>
<div class="t" style="left:689.30px;top:549.75px;font-size:37.00px;color:#404040;">1</div>
<div class="t" style="left:747.30px;top:549.75px;font-size:37.00px;color:#404040;">2</div>
<div class="t" style="left:805.30px;top:549.75px;font-size:37.00px;color:#404040;">3</div>
<div class="t" style="left:862.30px;top:549.75px;font-size:37.00px;color:#404040;">4</div>
<div class="t" style="left:919.80px;top:549.75px;font-size:37.00px;color:#404040;">5</div>
<div class="t" style="left:977.30px;top:549.75px;font-size:37.00px;color:#404040;">6</div>
<div class="t" style="left:1034.80px;top:549.75px;font-size:37.00px;color:#404040;">7</div>
<div class="t" style="left:1092.30px;top:549.75px;font-size:37.00px;color:#404040;">8</div>
<div class="t" style="left:1149.80px;top:549.75px;font-size:37.00px;color:#404040;">9</div>
<div class="t" style="left:1207.80px;top:549.75px;font-size:37.00px;color:#404040;">0</div>
<div class="t" style="left:682.20px;top:644.85px;font-size:37.00px;color:#404040;">@</div>
<div class="t" style="left:746.30px;top:644.85px;font-size:37.00px;color:#404040;">#</div>
<div class="t" style="left:803.70px;top:644.85px;font-size:37.00px;color:#404040;">$</div>
<div class="t" style="left:861.20px;top:644.85px;font-size:37.00px;color:#404040;">_</div>
<div class="t" style="left:916.00px;top:644.85px;font-size:37.00px;color:#404040;">&amp;</div>
<div class="t" style="left:979.50px;top:644.85px;font-size:37.00px;color:#404040;">-</div>
<div class="t" style="left:1033.00px;top:644.85px;font-size:37.00px;color:#404040;">+</div>
<div class="t" style="left:1094.60px;top:644.85px;font-size:37.00px;color:#404040;">(</div>
<div class="t" style="left:1155.50px;top:644.85px;font-size:37.00px;color:#404040;">)</div>
<div class="t" style="left:1213.00px;top:644.85px;font-size:37.00px;color:#404040;">/</div>
<div class="t" style="left:697.56px;top:746.91px;font-size:22.46px;color:#6a6a6a;transform:scaleX(1.0400);">=\&lt;</div>
<div class="t" style="left:777.80px;top:740.00px;font-size:40.00px;color:#404040;">*</div>
<div class="t" style="left:836.80px;top:742.45px;font-size:35.00px;color:#404040;">"</div>
<div class="t" style="left:896.50px;top:742.45px;font-size:35.00px;color:#404040;">'</div>
<div class="t" style="left:952.60px;top:740.75px;font-size:37.00px;color:#404040;">:</div>
<div class="t" style="left:1010.50px;top:740.75px;font-size:37.00px;color:#404040;">;</div>
<div class="t" style="left:1068.80px;top:740.75px;font-size:37.00px;color:#404040;">!</div>
<div class="t" style="left:1121.10px;top:740.75px;font-size:37.00px;color:#404040;">?</div>
<svg class="a" style="left:1186px;top:746px" width="34" height="27" viewBox="0 0 34 27"><path d="M9.5 1.5 H29.5 Q32 1.5 32 4 V21.5 Q32 24 29.5 24 H9.5 L1.8 12.75 Z" fill="none" stroke="#707070" stroke-width="2.2" stroke-linejoin="round"/><path d="M15.5 7.5 L24.5 17.5 M24.5 7.5 L15.5 17.5" stroke="#707070" stroke-width="2.2"/></svg>
<div class="t" style="left:692.70px;top:837.90px;font-size:23.77px;color:#666;transform:scaleX(0.9104);">ABC</div>
<div class="t" style="left:781.50px;top:827.05px;font-size:37.00px;color:#404040;">,</div>
<div class="t" style="left:832.13px;top:832.97px;font-size:15.80px;color:#888;font-weight:700;letter-spacing:2px;transform:scaleX(1.1722);">12</div>
<div class="t" style="left:833.30px;top:849.43px;font-size:16.67px;color:#888;font-weight:700;letter-spacing:2px;transform:scaleX(0.9857);">34</div>
<div class="a" style="left:886px;top:831px;width:201px;height:35px;background:#e6e6e6;border-radius:5px"></div>
<div class="t" style="left:952.93px;top:839.83px;font-size:18.55px;color:#444;transform:scaleX(0.8181);">QWERTY</div>
<div class="t" style="left:1125.80px;top:829.15px;font-size:37.00px;color:#404040;">.</div>
<div class="a" style="left:1166.8px;top:824.4px;width:72px;height:47.7px;background:#5193e9;border-radius:14px"></div>
<svg class="a" style="left:1187px;top:840px" width="32" height="20" viewBox="0 0 32 20"><path d="M27.5 2 V10.5 H4" fill="none" stroke="#fff" stroke-width="2.6"/><path d="M10.5 3.5 L3.5 10.5 L10.5 17.5" fill="none" stroke="#fff" stroke-width="2.6"/></svg>
<div class="a" style="left:905px;top:916px;width:108px;height:6px;background:#c6c6c8;border-radius:3px"></div>
</body></html>
